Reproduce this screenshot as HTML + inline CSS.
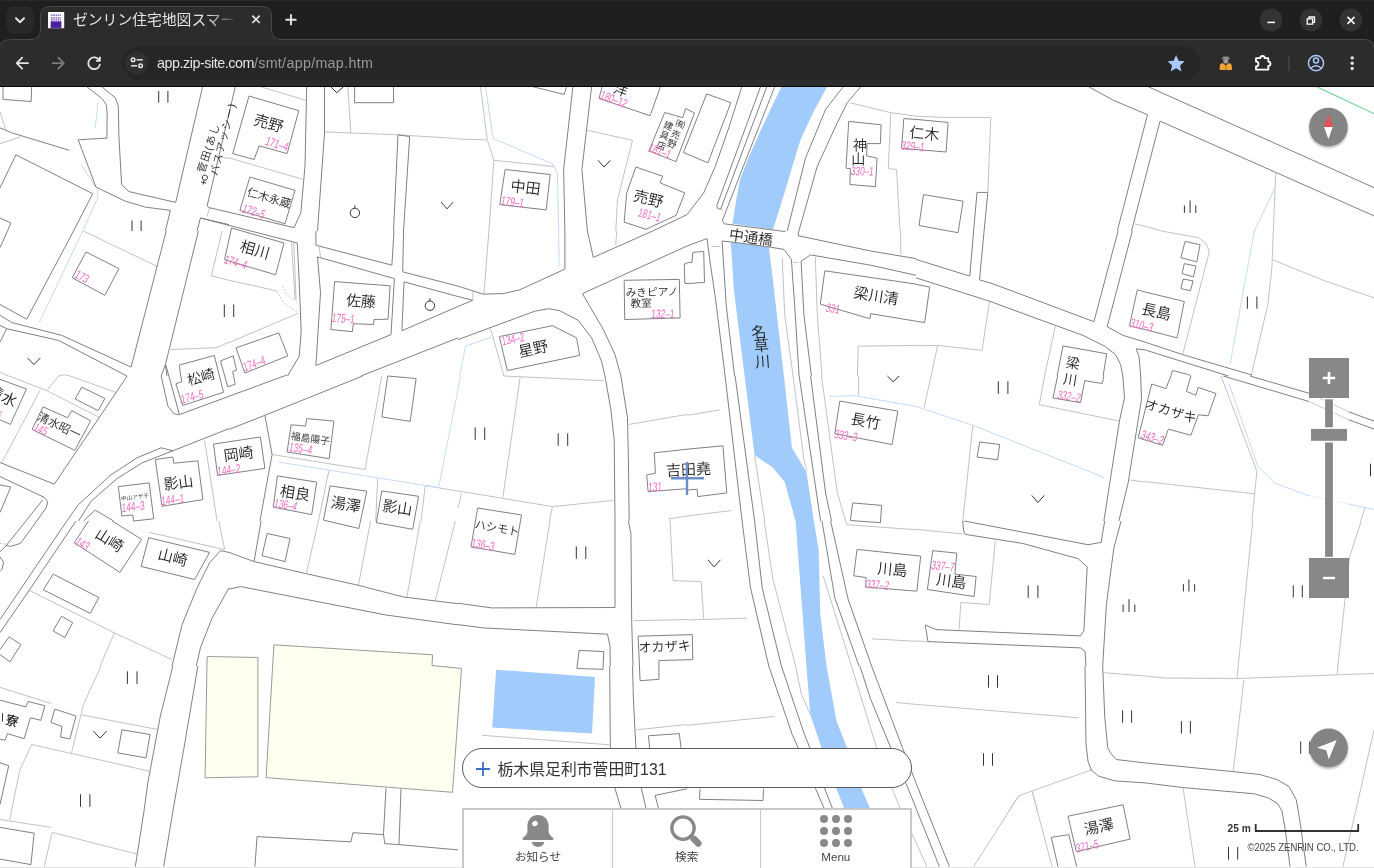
<!DOCTYPE html>
<html lang="ja">
<head>
<meta charset="utf-8">
<title>ゼンリン住宅地図スマートフォン</title>
<style>
*{box-sizing:border-box;margin:0;padding:0}
html,body{width:1374px;height:868px;overflow:hidden;background:#fff;font-family:"Liberation Sans","Noto Sans CJK JP",sans-serif}
#chrome{position:absolute;left:0;top:0;width:1374px;height:87px;background:#1f1f1f;color:#e3e3e3}
#tabtitle{position:absolute;left:73px;top:9px;font-size:14.800px;line-height:22px;white-space:nowrap;width:165px;overflow:hidden;color:#e3e3e3;-webkit-mask-image:linear-gradient(90deg,#000 82%,transparent 99%);mask-image:linear-gradient(90deg,#000 82%,transparent 99%)}
#url{position:absolute;left:157px;top:52px;font-size:14.300px;line-height:22px;color:#e3e3e3;white-space:nowrap;letter-spacing:-0.450px}
#url span{color:#9a9a9a;letter-spacing:0.3px}
#map{position:absolute;left:0;top:87px;width:1374px;height:781px;background:#fff;overflow:hidden}
#mapsvg{position:absolute;left:0;top:-87px;will-change:transform}
.ui{position:absolute}
</style>
</head>
<body>
<div id="map">
<svg id="mapsvg" width="1374" height="868" viewBox="0 0 1374 868">

<circle stroke="#333" stroke-width="1" fill="none" cx="354.9" cy="212.9" r="4.7"/>
<circle stroke="#333" stroke-width="1" fill="none" cx="429.9" cy="305.7" r="4.7"/>
<path stroke="none" fill="#a0cbfb" d="M496.1,669.7 595.0,676.9 592.0,733.6 492.2,727.5Z M783.9,81.0 781.4,86.8 770.5,109.4 758.8,134.4 747.1,161.2 740.1,179.5 736.3,199.6 732.4,223.8 773.0,229.6 785.5,189.6 793.9,161.2 800.6,139.4 813.9,111.1 827.0,86.8 830.3,81.0Z M730.8,241.9 733.8,289.5 744.6,376.0 754.6,455.3 772.2,467.0 784.7,482.0 795.6,521.0 800.6,587.8 806.4,665.9 810.3,714.4 821.5,747.8 836.5,788.7 844.0,807.9 867.4,868.0 895.8,868.0 869.9,807.9 861.5,788.7 847.0,747.8 836.5,721.1 826.5,665.9 820.3,614.5 818.6,549.4 813.9,521.0 806.4,472.0 791.9,447.8 783.9,376.0 773.0,281.1 768.8,246.9Z"/>
<path stroke="#9a9a9a" stroke-width="1" fill="#fffff0" d="M207.1,656.5 257.9,657.5 257.9,776.8 205.1,777.8Z M273.9,644.8 432.6,654.8 432.0,665.5 461.5,668.5 452.5,792.3 266.1,777.6Z"/>
<path stroke="#c2c2c2" stroke-width="1" fill="none" d="M0.0,143.6 20.9,136.9 M0.0,111.9 5.8,129.8 M209.6,207.9 207.1,216.3 M218.8,156.2 229.0,158.7 M260.7,86.8 305.5,100.2 M229.0,157.8 303.3,179.5 M347.9,86.8 350.9,133.6 M324.5,131.9 397.7,134.8 458.0,138.6 M480.5,86.8 487.2,139.4 493.9,160.3 488.9,231.0 M458.0,139.1 486.4,139.8 M493.9,160.3 554.0,166.5 M587.4,130.3 632.5,140.3 617.5,199.6 615.8,231.0 M719.6,207.9 722.9,210.4 M849.9,102.7 890.8,112.7 916.0,116.1 M890.8,112.7 888.3,168.7 896.6,169.5 900.0,231.0 M916.0,116.1 941.1,117.4 990.8,117.4 987.8,192.9 M1134.8,223.8 1145.0,226.3 M1275.8,172.9 1273.3,231.0 M1145.0,226.3 1161.7,231.0 M83.5,231.0 157.0,266.4 M170.4,349.6 217.1,347.6 229.0,342.1 M291.6,242.4 295.0,299.5 M293.8,242.7 296.1,300.3 M222.2,231.0 211.3,275.8 229.0,280.3 276.6,290.8 M229.0,342.6 298.3,313.2 M319.2,246.9 320.5,256.9 M488.9,231.0 483.9,293.6 M472.7,300.3 473.0,291.1 M616.7,231.0 615.8,245.2 M490.6,328.7 503.9,376.0 M711.2,246.5 720.4,246.5 M782.2,257.7 784.7,314.5 793.1,376.0 M793.1,262.4 798.6,262.4 M815.3,256.9 817.3,314.5 822.0,376.0 M900.5,231.0 900.8,254.4 M916.0,345.4 858.2,346.2 857.4,376.0 M989.5,301.2 982.0,350.4 937.7,345.4 916.0,345.7 M937.7,345.4 931.0,376.0 M1055.5,325.4 1044.6,376.0 M1161.7,231.0 1198.4,237.7 1206.0,243.5 1209.3,251.9 1182.6,354.6 M1273.3,231.0 1271.9,267.7 1267.8,304.5 1251.1,376.0 M1272.3,259.7 1325.4,281.1 1374.0,297.8 M58.5,376.0 46.8,390.7 M9.2,376.0 46.8,390.7 100.2,417.8 M40.1,390.2 1.7,462.9 M70.2,376.0 116.9,392.7 M204.6,440.3 217.1,521.0 M272.1,454.5 365.1,469.5 381.8,376.0 M458.0,491.2 425.3,485.4 421.1,521.0 M328.9,470.4 318.4,521.0 M377.7,478.2 375.7,521.0 M503.9,376.0 604.1,380.7 M520.1,377.7 502.8,497.6 M458.0,490.9 552.4,506.6 613.7,500.4 M461.7,492.9 458.0,508.0 M552.4,506.6 549.5,521.0 M629.2,424.4 687.0,414.4 M669.8,521.0 669.3,518.8 687.0,516.0 M754.6,455.3 764.7,521.0 M793.1,376.0 803.9,459.5 806.9,471.2 M821.5,376.0 837.3,492.9 845.7,521.0 846.5,524.7 916.0,529.7 M687.0,415.3 719.6,409.9 M687.0,516.0 731.8,510.5 M858.7,376.0 858.7,395.7 M931.0,376.0 924.0,407.7 M972.8,425.3 962.8,521.0 M1044.6,376.0 1039.3,404.7 1119.4,421.1 M1129.8,479.9 1145.0,482.1 M1221.0,376.0 1256.9,471.2 1251.9,521.0 M1145.0,481.6 1254.4,493.8 M1365.1,508.0 1360.5,521.0 M149.5,532.4 224.7,549.7 M218.8,521.0 224.7,549.7 M29.2,590.3 114.4,632.9 172.0,659.6 M114.4,632.9 100.2,666.0 M318.4,521.0 306.2,573.6 M370.6,521.0 358.4,585.3 M420.2,521.0 406.9,597.0 M455.3,521.0 435.3,600.3 M549.9,521.0 536.2,607.0 M670.1,521.0 673.1,580.6 687.0,581.1 M633.4,620.7 687.0,619.5 M764.2,521.0 773.0,579.5 795.6,666.0 M823.1,575.8 851.5,666.0 M687.0,581.1 701.2,581.5 703.7,618.7 M687.0,619.9 746.8,618.2 M871.6,638.8 916.0,641.3 M916.0,529.4 963.6,534.0 M995.3,540.7 989.2,604.5 960.8,602.5 959.1,629.6 M916.0,640.9 928.0,641.6 M1252.7,521.0 1238.2,666.0 M1361.3,521.0 1349.6,556.9 1337.9,666.0 M101.1,666.0 83.5,704.4 71.5,752.9 M0.0,687.4 51.4,703.6 M81.8,714.9 157.8,729.5 M31.7,744.5 149.5,771.2 M31.7,744.5 20.0,769.6 11.4,811.0 M482.2,735.3 609.2,744.8 M636.4,729.8 687.0,724.5 M795.6,666.0 801.4,694.4 810.3,714.4 M851.5,666.0 876.6,747.8 892.4,788.8 900.0,808.0 M687.0,725.3 774.7,716.4 M896.1,702.4 916.0,704.4 M916.0,704.4 1078.9,717.8 M1104.4,672.7 1145.0,676.0 M1091.4,769.9 1032.1,790.9 1018.7,795.9 1008.7,811.0 M1032.1,790.9 1037.6,811.0 M1145.0,676.0 1165.0,678.0 1236.9,678.5 1374.0,673.5 M1238.2,666.0 1236.9,678.5 M1243.9,679.4 1233.2,771.6 M1337.9,666.0 1337.1,674.4 M1374.0,729.5 1355.8,811.0 M1183.1,787.9 1186.4,811.0 M11.4,811.0 9.7,820.7 M0.0,819.5 50.9,827.4 M137.0,854.1 52.1,832.4 44.3,866.6 M1018.7,796.0 973.6,866.6 M1032.1,791.1 1052.1,866.6 M900.0,807.9 916.0,842.4 926.9,866.6 M1186.4,811.0 1195.1,866.6 M1355.8,811.0 1342.9,866.6 M0.0,372.2 9.2,376.3 M58.5,376.0 64.3,374.7 70.2,376.0"/>
<path stroke="#bbb" stroke-width="0.8" fill="none" stroke-dasharray="2 1.5" d="M282.4,286.1 287.5,295.3 298.3,302.8 M276.6,291.1 284.1,303.7 298.3,312.8 M0.0,543.4 5.5,544.1"/>
<path stroke="#c2dcfb" stroke-width="1" fill="none" d="M98.0,101.9 95.2,128.1 M81.0,164.5 97.7,189.6 97.7,197.9 82.7,231.0 M485.6,86.8 493.1,138.6 552.4,163.7 557.4,172.9 558.7,231.0 M1274.9,187.9 1254.4,231.0 M82.7,231.0 39.3,322.5 M558.7,231.0 559.1,266.4 M491.4,337.1 465.5,346.2 459.7,376.0 M1254.4,231.0 1243.5,289.5 1230.2,363.8 M278.3,462.0 438.6,487.6 458.0,389.4 M458.0,389.4 460.5,376.0 M829.0,396.4 854.0,395.7 916.0,406.4 M916.0,406.4 972.8,425.3 1104.7,477.6 M1229.0,383.5 1257.7,466.2 1274.4,482.9 1306.2,494.9 1374.0,509.6"/>
<path stroke="#7fd9a3" stroke-width="1.3" fill="none" d="M1317.0,86.8 1374.0,113.6"/>
<path stroke="#808080" stroke-width="1" fill="none" d="M3.0,86.0 3.0,99.4 31.2,101.5 31.7,86.0 M0.0,127.8 11.7,132.8 69.3,150.3 M0.0,187.9 15.9,154.8 92.7,193.7 73.5,231.0 M0.0,218.0 10.9,223.0 7.5,231.0 M86.9,86.8 101.9,98.5 106.1,104.4 107.2,112.7 106.9,138.1 78.2,139.8 96.0,187.1 125.3,201.2 145.3,207.1 170.4,210.4 165.4,231.0 M101.9,86.8 115.2,97.7 118.3,106.0 118.9,136.1 121.6,184.5 128.9,191.6 175.7,202.4 202.6,86.8 M229.0,224.6 200.4,218.0 197.1,231.0 M235.3,86.8 207.1,205.9 209.0,207.6 294.1,227.6 300.8,212.9 305.0,166.2 306.7,86.8 M249.0,96.0 298.8,110.7 287.1,153.6 259.1,145.8 254.1,159.5 232.7,153.6Z M249.9,177.0 295.0,190.4 285.0,223.8 239.9,210.4Z M324.5,86.8 324.5,132.8 317.5,231.0 M354.6,86.8 354.6,102.7 393.5,102.7 393.5,86.8 M393.5,231.0 398.0,134.8 409.7,136.6 403.5,231.0 M533.2,86.8 564.1,94.4 566.6,86.8 M572.9,86.8 563.6,169.5 564.9,231.0 M591.6,86.8 581.9,169.5 587.4,231.0 M505.1,169.5 550.2,174.5 546.2,209.9 499.8,204.6Z M602.0,86.8 599.1,98.5 650.1,115.7 660.4,86.8 M635.9,167.0 662.6,176.2 660.1,182.9 684.8,192.9 676.0,215.4 645.9,229.3 624.2,222.1 626.7,192.9Z M664.7,112.5 682.8,117.7 685.6,108.5 694.5,112.9 676.0,161.7 649.0,150.8Z M706.7,93.9 730.9,102.7 707.9,162.8 683.5,152.5Z M741.8,86.8 728.8,127.8 715.4,166.2 703.7,192.9 687.0,214.6 M760.5,86.8 716.7,205.9 717.9,208.8 720.7,209.1 766.8,86.8 M774.7,86.8 742.1,169.5 722.4,220.5 724.1,223.8 773.0,230.0 785.5,231.6 M843.2,86.8 825.6,109.4 805.6,157.8 787.2,231.0 M860.7,86.8 847.3,102.7 837.3,122.7 817.3,166.2 798.9,231.0 M848.7,121.4 881.1,124.8 880.4,143.6 867.1,143.6 866.6,155.8 877.1,158.2 875.4,186.7 849.9,184.5 850.4,168.7 846.0,168.2Z M916.0,119.4 903.8,118.6 901.6,148.1 916.0,149.5 M916.0,119.4 948.1,122.4 946.1,152.0 916.0,149.5 M919.0,225.5 923.5,194.6 963.1,201.2 958.1,232.7Z M973.6,231.0 977.0,192.4 987.8,192.4 984.1,231.0 M1088.9,86.8 1113.1,100.2 1147.5,114.7 1117.3,231.0 M1148.3,86.8 1374.0,187.6 M1131.5,231.0 1160.0,121.1 1374.0,215.9 M73.5,231.0 26.7,319.2 0.0,304.5 M7.5,231.0 0.0,247.7 M166.2,231.0 131.1,367.1 61.8,335.4 11.7,322.5 0.0,315.3 M0.0,325.4 6.7,328.7 0.0,342.1 M6.7,328.7 58.5,340.4 126.9,376.0 M86.0,251.9 118.9,268.6 104.9,295.3 72.2,277.8Z M198.4,231.0 165.4,364.6 161.2,376.0 M165.4,364.6 167.0,376.0 M200.4,218.0 297.3,243.0 299.2,281.1 301.2,331.2 299.2,356.3 287.5,376.0 M231.5,228.0 284.0,243.0 275.6,274.8 224.5,259.7Z M236.0,347.9 278.8,332.9 287.8,355.9 244.9,373.0Z M317.5,256.9 394.4,278.6 391.0,334.6 315.9,365.5 320.5,292.8 317.5,256.9 M334.6,281.6 390.2,285.8 388.0,319.2 374.0,319.5 373.5,324.5 353.4,323.7 352.3,331.7 330.9,329.5Z M315.9,231.0 315.9,245.2 391.9,265.2 394.0,231.0 M403.5,231.0 402.7,271.9 458.0,286.1 M458.0,296.5 404.0,281.9 401.9,330.7 458.0,306.5 M458.0,337.9 361.0,376.0 M564.9,231.0 564.9,269.1 519.8,289.8 503.1,293.6 483.1,294.1 458.0,286.1 M458.0,296.5 472.7,300.3 458.0,306.5 M587.4,231.0 593.3,257.4 652.6,231.0 687.0,214.6 M687.0,246.0 582.4,293.6 603.3,329.5 615.0,354.6 620.9,376.0 M624.2,280.3 679.3,279.4 680.1,317.9 624.7,319.5Z M687.0,263.6 684.3,263.9 684.8,283.1 687.0,283.6 M458.0,339.6 534.8,311.2 549.0,308.7 559.9,310.8 578.3,320.4 591.6,337.9 601.6,361.3 605.0,376.0 M499.4,336.6 552.4,325.7 576.6,337.9 579.6,355.4 507.3,370.5Z M687.0,246.0 707.0,238.5 710.4,264.4 715.4,297.8 725.1,376.0 M687.0,262.7 692.0,262.4 692.8,252.4 703.7,251.4 704.5,282.4 687.0,283.6 M734.6,376.0 726.3,306.2 722.1,241.0 730.8,241.9 768.8,246.9 783.9,249.4 791.4,259.4 794.7,306.2 799.1,376.0 M916.0,275.3 870.7,265.2 810.6,254.9 801.1,261.1 803.9,314.5 811.4,376.0 M798.9,231.0 798.1,235.7 870.7,251.0 916.0,258.6 M916.0,284.1 824.8,270.8 820.3,304.2 869.9,318.7 870.7,313.7 916.0,321.2 M973.6,231.0 969.8,276.1 916.0,259.4 M984.1,231.0 979.5,279.8 993.7,284.1 1093.9,321.7 1118.1,231.0 M916.0,277.8 989.5,301.2 1055.5,325.4 1083.0,335.4 1104.7,346.2 1115.6,354.6 1120.6,364.6 1122.8,376.0 M916.0,284.4 929.7,287.0 924.7,322.5 916.0,321.2 M1132.3,231.0 1107.2,326.7 1123.1,335.4 1145.0,342.1 M1145.0,292.0 1137.3,289.8 1129.5,325.9 1145.0,329.5 M1057.1,376.0 1063.0,345.9 1106.7,353.8 1103.1,376.0 M1145.0,349.9 1136.1,348.8 1139.0,356.3 1140.7,376.0 M1185.1,241.4 1200.1,244.7 1196.8,261.9 1180.9,257.7Z M1184.3,263.6 1195.9,266.1 1193.4,276.9 1182.1,273.6Z M1183.1,279.1 1193.1,280.8 1190.4,290.8 1180.9,288.6Z M1145.0,292.0 1184.3,301.5 1177.1,337.9 1145.0,329.5 M1145.0,342.1 1182.6,354.6 1251.9,375.0 M1145.0,349.9 1228.5,376.0 M126.9,376.0 126.1,377.7 54.3,484.2 0.0,462.5 M0.0,379.3 26.4,389.0 10.4,424.4 0.0,419.8 M43.1,406.9 67.6,417.8 71.8,410.7 90.7,420.8 74.8,450.3 32.1,429.4Z M81.8,387.2 104.9,398.5 98.2,410.7 75.2,399.0Z M66.8,521.0 78.5,504.6 110.2,475.4 137.0,457.8 161.2,447.8 172.9,450.8 229.0,428.6 M78.5,521.0 91.0,501.3 116.9,478.7 142.0,462.9 172.9,450.8 M161.2,376.0 167.9,406.1 173.7,413.6 178.7,414.8 284.1,376.0 286.6,375.2 M155.3,459.5 172.9,457.0 173.7,463.2 197.9,460.9 202.9,499.6 162.0,506.3Z M118.3,486.6 149.2,482.9 153.7,518.8 133.6,521.0 132.8,515.0 121.9,516.0Z M83.5,521.0 95.2,510.0 113.6,521.0 M362.6,376.0 264.9,415.3 229.0,429.4 M264.9,415.3 272.1,454.5 259.9,521.0 M291.1,424.8 305.5,426.1 306.7,418.6 333.9,421.1 329.2,458.7 287.1,452.0Z M387.7,376.0 416.1,378.5 410.2,421.4 381.8,416.9Z M213.5,444.1 260.4,437.0 264.9,468.4 217.6,475.4Z M277.4,475.9 316.7,482.1 311.7,514.6 273.3,507.1Z M330.1,485.9 366.8,491.2 358.9,528.5 323.5,520.1Z M381.8,490.9 418.6,496.3 412.7,529.3 376.3,522.7Z M605.0,376.0 610.8,409.4 614.2,439.5 615.0,521.0 M620.9,376.0 627.5,417.8 628.4,459.5 629.2,521.0 M687.0,449.2 654.3,452.8 655.4,473.2 646.7,474.9 648.1,491.6 687.0,488.7 M477.7,508.0 521.5,515.0 514.8,554.4 471.0,546.9Z M725.1,376.0 742.1,521.0 M735.1,376.0 754.6,521.0 M799.2,376.0 820.6,521.0 M810.6,376.0 825.6,492.9 831.5,521.0 M687.0,449.2 722.9,445.8 726.8,492.9 697.9,496.6 697.0,489.2 687.0,490.1 M839.8,401.1 897.8,411.1 892.1,444.5 834.8,433.6Z M852.7,502.9 881.6,505.4 880.4,522.7 850.4,520.5Z M1057.6,376.0 1053.0,398.0 1080.5,402.7 1084.7,380.7 1102.2,383.5 1103.9,376.0 M1122.8,376.0 1124.5,397.7 1119.4,421.1 1103.9,521.0 M1140.7,376.0 1141.5,399.4 1128.1,482.9 1118.9,521.0 M979.8,442.0 999.8,444.5 997.5,459.8 977.0,457.0Z M1170.9,376.0 1165.9,388.5 1151.7,384.0 1138.2,437.8 1162.5,445.3 1168.4,429.1 1190.9,435.3 1198.4,414.8 1208.1,415.8 1216.0,393.5 1198.1,387.4 1195.9,395.2 1186.4,391.4 1190.9,376.0 1188.8,374.7 1172.6,370.5 1170.9,376.0 M1223.2,376.0 1308.7,401.4 1348.8,419.8 1374.0,429.1 M1250.2,376.0 1310.4,393.7 1348.8,411.9 1374.0,421.1 M0.0,476.6 44.2,497.3 47.7,501.5 46.3,507.7 20.5,543.4 10.4,546.4 6.2,545.4 M42.6,500.1 5.8,546.0 0.0,551.9 M0.0,484.9 10.8,487.0 0.0,512.5 M0.0,556.8 3.5,562.3 2.1,569.2 0.0,571.3 M66.8,521.0 0.0,619.5 M76.0,521.0 29.2,590.3 0.0,632.6 M88.5,521.0 74.3,542.7 119.9,572.4 141.6,539.4 112.2,521.0 M148.7,537.7 209.6,552.4 194.6,579.5 141.1,566.4Z M53.1,574.1 98.9,597.5 90.2,613.4 43.4,589.8Z M61.5,616.2 72.7,622.6 64.8,637.6 53.1,630.9Z M0.0,649.6 9.2,636.8 20.9,644.6 10.0,661.8 0.0,654.6 M220.5,550.7 209.6,562.8 197.1,587.8 182.1,624.6 172.0,666.0 M229.0,587.8 212.1,617.9 200.4,647.9 196.3,666.0 M261.1,521.0 254.1,561.6 M220.5,550.7 229.0,552.4 254.1,561.6 305.8,573.6 358.4,585.3 403.5,597.0 458.0,603.7 M229.0,589.1 240.7,586.6 386.0,615.0 458.0,624.9 M267.1,533.5 290.0,538.5 285.0,561.6 262.1,555.7Z M615.0,521.0 615.0,607.5 491.4,607.9 458.0,603.2 M628.4,521.0 630.9,533.5 631.7,621.2 633.0,666.0 M458.0,624.6 483.1,627.9 607.5,634.2 610.0,646.3 610.3,666.0 M742.1,521.0 750.5,587.8 768.8,666.0 M754.6,521.0 762.2,587.8 781.4,666.0 M822.0,521.0 834.8,597.8 859.0,666.0 M830.6,521.0 848.2,599.5 871.6,666.0 M857.0,549.4 920.7,556.1 916.8,591.2 865.7,587.0 866.1,577.5 853.7,575.8Z M962.8,521.0 963.6,531.0 965.3,534.4 1022.9,543.5 1078.0,558.6 1087.2,566.9 1083.9,630.4 1080.5,635.9 936.0,629.6 925.2,624.9 928.0,641.6 1080.5,647.9 1085.0,651.3 1086.0,666.0 M964.4,521.0 1088.0,544.7 1101.1,542.4 1104.7,521.0 M932.7,550.7 956.9,553.1 954.8,574.1 976.1,576.5 974.1,596.5 927.4,589.5Z M1121.1,521.0 1113.9,547.7 1106.4,604.5 1102.7,666.0 M172.9,666.0 160.3,716.1 147.8,782.9 144.0,811.0 M197.9,666.0 183.7,749.5 172.9,811.0 M0.0,700.2 25.9,706.9 28.1,701.4 44.8,705.8 40.9,720.3 30.4,717.8 24.2,738.7 7.5,733.6 5.0,740.3 0.0,739.2 M54.8,709.1 76.0,716.1 69.8,739.0 60.5,737.0 62.1,726.5 50.9,722.5Z M121.9,729.8 150.0,734.5 146.1,757.9 117.8,752.9Z M0.0,762.9 8.7,765.7 0.0,804.6 M579.1,650.4 603.8,651.6 603.0,669.3 576.9,668.5Z M638.1,636.2 692.3,634.6 692.8,659.6 658.9,660.5 658.9,679.3 640.1,680.7Z M609.7,666.0 610.3,747.8 613.3,782.9 620.9,808.0 M632.5,666.0 633.4,699.4 635.9,747.8 640.1,782.9 645.9,808.0 M649.7,747.8 648.4,735.8 679.3,733.6 681.0,747.8 M687.0,788.8 655.1,795.4 658.4,808.0 M768.8,666.0 792.2,734.5 798.1,747.8 815.6,788.8 824.0,808.0 826.5,814.7 M781.4,666.0 803.9,732.8 809.8,747.8 824.8,788.8 832.3,808.0 834.8,814.7 M859.9,666.0 870.7,699.4 890.8,747.8 905.8,782.9 916.0,808.0 M871.6,666.0 902.5,747.8 916.0,782.9 M700.0,788.8 699.5,799.3 763.0,800.5 763.5,788.8 M1085.0,666.0 1086.0,744.5 1088.0,761.2 1091.4,770.4 1098.9,776.2 1114.8,780.9 1145.0,782.9 M1102.7,666.0 1104.7,716.1 1107.7,747.8 1110.6,752.9 1116.1,759.5 1145.0,762.9 M1145.0,762.9 1233.2,771.6 1260.2,774.6 1277.0,779.6 1289.0,786.6 1296.2,799.6 1298.3,811.0 M1145.0,782.9 1183.4,787.6 1254.4,793.8 1268.6,798.0 1277.8,803.8 1282.0,811.0 M0.0,827.4 34.2,833.2 30.9,864.6 0.0,859.1 M144.0,811.0 135.3,866.6 M172.9,811.0 163.7,866.6 M386.0,788.1 383.5,834.1 384.7,843.6 399.0,844.6 401.0,789.0 M254.9,866.6 257.1,836.6 350.9,841.9 352.9,832.7 383.5,834.6 M399.0,844.6 458.0,849.9 M1068.0,816.2 1123.1,804.8 1130.1,839.1 1076.3,851.6Z M1058.0,866.6 1051.3,837.4 1068.8,834.6 1076.7,866.6 M916.0,783.1 949.4,866.6 M916.0,808.2 939.4,866.6 M1298.3,811.0 1301.2,829.9 1306.2,866.6 M1282.0,811.0 1285.3,829.9 1290.0,866.6 M179.2,365.1 214.3,355.5 223.5,392.3 182.6,405.5 175.9,383.8 181.7,381.8Z M220.5,360.9 233.2,355.9 236.5,370.1 232.7,371.4 235.2,384.3 227.7,386.8Z M165.9,365.1 179.2,413.8"/>
<path stroke="#333" stroke-width="1" fill="none" d="M158.7,91.0 158.7,102.7 M167.9,91.0 167.9,102.7 M132.0,220.5 132.0,231.0 M141.1,220.5 141.1,231.0 M330.9,86.8 336.7,92.7 343.4,86.8 M354.9,205.4 354.9,208.4 M441.1,202.1 447.0,208.8 453.2,202.1 M598.0,160.3 604.1,167.0 610.3,160.3 M1184.4,205.4 1184.4,212.9 M1190.1,200.4 1190.1,212.9 M1195.8,205.4 1195.8,212.9 M27.6,357.9 33.9,364.6 40.4,357.9 M233.7,304.5 233.7,317.0 M224.3,304.5 224.3,317.0 M429.9,298.3 429.9,301.2 M1247.4,296.5 1247.4,308.7 M1256.9,296.5 1256.9,308.7 M475.2,427.4 475.2,439.8 M484.7,427.4 484.7,439.8 M558.2,433.3 558.2,445.8 M567.7,433.3 567.7,445.8 M887.4,376.0 893.3,381.8 899.1,376.0 M998.3,381.3 998.3,393.9 M1007.9,381.3 1007.9,393.9 M1031.8,495.4 1037.9,502.6 1044.3,495.4 M1370.5,463.7 1370.5,476.2 M576.3,546.4 576.3,558.9 M585.8,546.4 585.8,558.9 M707.9,559.8 714.1,566.9 720.4,559.8 M1028.2,585.3 1028.2,597.8 M1037.9,585.3 1037.9,597.8 M1123.1,604.5 1123.1,612.0 M1129.0,599.2 1129.0,612.0 M1134.8,604.5 1134.8,612.0 M1183.4,584.1 1183.4,591.5 M1188.9,579.5 1188.9,591.5 M1194.6,584.1 1194.6,591.5 M1293.3,585.3 1293.3,597.5 M1302.3,585.3 1302.3,597.5 M127.4,671.3 127.4,683.9 M137.0,671.3 137.0,683.9 M80.5,794.3 80.5,806.8 M89.9,794.3 89.9,806.8 M93.5,731.1 99.9,738.2 106.6,731.1 M2.5,713.3 2.5,721.6 M988.5,675.2 988.5,687.7 M997.5,675.2 997.5,687.7 M983.5,753.2 983.5,765.7 M992.5,753.2 992.5,765.7 M1122.6,710.3 1122.6,722.8 M1131.6,710.3 1131.6,722.8 M1181.4,721.1 1181.4,733.6 M1190.4,721.1 1190.4,733.6 M1300.7,741.5 1300.7,753.7 M1309.7,741.5 1309.7,753.7 M1228.5,846.9 1228.5,859.6 M1237.7,846.9 1237.7,859.6"/>
<g font-family="'Liberation Sans','Noto Sans CJK JP',sans-serif" font-weight="350" fill="#1e1e1e" text-anchor="middle">
<text transform="translate(268.6 123.1) rotate(16)" font-size="15" dy="0.36em">売野</text>
<text transform="translate(269.1 197.9) rotate(16)" font-size="11.3" dy="0.36em">仁木永蔵</text>
<text transform="translate(254.9 249.7) rotate(16)" font-size="15" dy="0.36em">相川</text>
<text transform="translate(361.0 301.2) rotate(4)" font-size="15" dy="0.36em">佐藤</text>
<text transform="translate(2.5 396.0) rotate(25)" font-size="15" dy="0.36em">清水</text>
<text transform="translate(59.3 425.6) rotate(25)" font-size="11.7" dy="0.36em">清水昭一</text>
<text transform="translate(201.0 377.0) rotate(-15)" font-size="14" dy="0.36em">松崎</text>
<text transform="translate(178.4 482.6) rotate(-7)" font-size="15" dy="0.36em">影山</text>
<text transform="translate(135.0 497.1) rotate(-7)" font-size="5.6" dy="0.36em">中山アヤ子</text>
<text transform="translate(238.5 453.8) rotate(-8)" font-size="15" dy="0.36em">岡崎</text>
<text transform="translate(310.5 438.6) rotate(8)" font-size="9.8" dy="0.36em">福島陽子</text>
<text transform="translate(295.0 492.9) rotate(9)" font-size="15" dy="0.36em">相良</text>
<text transform="translate(345.9 504.3) rotate(9)" font-size="15" dy="0.36em">湯澤</text>
<text transform="translate(397.4 507.6) rotate(9)" font-size="15" dy="0.36em">影山</text>
<text transform="translate(109.7 540.2) rotate(32)" font-size="15" dy="0.36em">山崎</text>
<text transform="translate(172.9 557.2) rotate(14)" font-size="15" dy="0.36em">山崎</text>
<text transform="translate(525.6 187.4) rotate(7)" font-size="15" dy="0.36em">中田</text>
<text transform="translate(620.8 90.0) rotate(20)" font-size="14" dy="0.36em">洋</text>
<text transform="translate(648.4 198.7) rotate(14)" font-size="15" dy="0.36em">売野</text>
<text transform="translate(859.9 145.3) rotate(0)" font-size="14" dy="0.36em">神</text>
<text transform="translate(858.2 158.7) rotate(0)" font-size="14" dy="0.36em">山</text>
<text transform="translate(924.5 133.5) rotate(5)" font-size="15" dy="0.36em">仁木</text>
<text transform="translate(751.0 237.3) rotate(8)" font-size="14.7" dy="0.36em">中通橋</text>
<text transform="translate(758.8 332.0) rotate(-4)" font-size="15" dy="0.36em">名</text>
<text transform="translate(761.3 345.6) rotate(-4)" font-size="15" dy="0.36em">草</text>
<text transform="translate(762.5 361.5) rotate(-4)" font-size="15" dy="0.36em">川</text>
<text transform="translate(876.1 295.8) rotate(9)" font-size="15" dy="0.36em">梁川清</text>
<text transform="translate(651.8 292.0) rotate(-1)" font-size="10.7" dy="0.36em">みきピアノ</text>
<text transform="translate(641.2 303.2) rotate(-1)" font-size="10.7" dy="0.36em">教室</text>
<text transform="translate(533.2 348.8) rotate(-12)" font-size="15" dy="0.36em">星野</text>
<text transform="translate(1156.5 311.5) rotate(13)" font-size="15" dy="0.36em">長島</text>
<text transform="translate(1073.0 363.0) rotate(9)" font-size="14" dy="0.36em">梁</text>
<text transform="translate(1070.3 379.5) rotate(9)" font-size="14" dy="0.36em">川</text>
<text transform="translate(688.5 469.5) rotate(-3)" font-size="15" dy="0.36em">吉田堯</text>
<text transform="translate(497.1 528.0) rotate(10)" font-size="11.3" dy="0.36em">ハシモト</text>
<text transform="translate(865.7 421.1) rotate(10)" font-size="15" dy="0.36em">長竹</text>
<text transform="translate(1170.9 411.1) rotate(17)" font-size="13.3" dy="0.36em">オカザキ</text>
<text transform="translate(892.4 569.4) rotate(5)" font-size="15" dy="0.36em">川島</text>
<text transform="translate(951.4 581.1) rotate(8)" font-size="15" dy="0.36em">川島</text>
<text transform="translate(664.6 646.5) rotate(-2)" font-size="13.2" dy="0.36em">オカザキ</text>
<text transform="translate(12.0 720.8) rotate(15)" font-size="13" dy="0.36em" font-weight="500">寮</text>
<text transform="translate(1098.9 826.6) rotate(-12)" font-size="15" dy="0.36em">湯澤</text>
<text transform="translate(680.4 124.2) rotate(20)" font-size="9.5" dy="0.36em">㈲</text>
<text transform="translate(675.6 134.7) rotate(20)" font-size="9.5" dy="0.36em">売</text>
<text transform="translate(671.9 144.0) rotate(20)" font-size="9.5" dy="0.36em">野</text>
<text transform="translate(668.3 125.8) rotate(20)" font-size="9.5" dy="0.36em">建</text>
<text transform="translate(664.3 135.5) rotate(20)" font-size="9.5" dy="0.36em">具</text>
<text transform="translate(661.5 145.6) rotate(20)" font-size="9.5" dy="0.36em">店</text>
<text transform="translate(208.5 147.8) rotate(-72)" font-size="10.6" dy="0.36em" letter-spacing="1.1">菅田(あし</text>
<text transform="translate(222.9 139.0) rotate(-75.7)" font-size="10.6" dy="0.36em" letter-spacing="1.1">バスアッシー)</text>
</g>
<g font-family="'Liberation Sans','Noto Sans CJK JP',sans-serif" fill="#f26cc3" text-anchor="middle" font-size="12.4">
<text transform="translate(277.1 143.6) rotate(16) skewX(-5) scale(0.67 1)" dy="0.36em">171–4</text>
<text transform="translate(254.0 211.3) rotate(16) skewX(-5) scale(0.67 1)" dy="0.36em">172–5</text>
<text transform="translate(235.9 262.0) rotate(16) skewX(-5) scale(0.67 1)" dy="0.36em">174–4</text>
<text transform="translate(82.2 276.4) rotate(27) skewX(-5) scale(0.67 1)" dy="0.36em">173</text>
<text transform="translate(343.4 318.2) rotate(4) skewX(-5) scale(0.67 1)" dy="0.36em">175–1</text>
<text transform="translate(254.1 363.3) rotate(-20) skewX(-5) scale(0.67 1)" dy="0.36em">174–4</text>
<text transform="translate(-5.0 413.0) rotate(25) skewX(-5) scale(0.67 1)" dy="0.36em">146</text>
<text transform="translate(40.9 429.1) rotate(25) skewX(-5) scale(0.67 1)" dy="0.36em">145</text>
<text transform="translate(192.1 396.4) rotate(-15) skewX(-5) scale(0.67 1)" dy="0.36em">174–5</text>
<text transform="translate(172.7 499.3) rotate(-7) skewX(-5) scale(0.67 1)" dy="0.36em">144–1</text>
<text transform="translate(133.1 506.3) rotate(-7) skewX(-5) scale(0.67 1)" dy="0.36em">144–3</text>
<text transform="translate(228.8 469.5) rotate(-8) skewX(-5) scale(0.67 1)" dy="0.36em">144–2</text>
<text transform="translate(300.8 448.2) rotate(8) skewX(-5) scale(0.67 1)" dy="0.36em">135–4</text>
<text transform="translate(285.8 504.6) rotate(9) skewX(-5) scale(0.67 1)" dy="0.36em">136–4</text>
<text transform="translate(82.7 543.5) rotate(32) skewX(-5) scale(0.67 1)" dy="0.36em">143</text>
<text transform="translate(512.6 201.6) rotate(7) skewX(-5) scale(0.67 1)" dy="0.36em">179–1</text>
<text transform="translate(614.0 99.0) rotate(20) skewX(-5) scale(0.67 1)" dy="0.36em">180–12</text>
<text transform="translate(660.0 150.8) rotate(20) skewX(-5) scale(0.67 1)" dy="0.36em">181–1</text>
<text transform="translate(649.7 214.6) rotate(14) skewX(-5) scale(0.67 1)" dy="0.36em">181–1</text>
<text transform="translate(862.4 170.8) rotate(1) skewX(-5) scale(0.67 1)" dy="0.36em">330–1</text>
<text transform="translate(913.0 146.0) rotate(5) skewX(-5) scale(0.67 1)" dy="0.36em">329–1</text>
<text transform="translate(833.1 308.3) rotate(9) skewX(-5) scale(0.67 1)" dy="0.36em">331</text>
<text transform="translate(663.0 313.7) rotate(0) skewX(-5) scale(0.67 1)" dy="0.36em">132–1</text>
<text transform="translate(513.0 338.7) rotate(-12) skewX(-5) scale(0.67 1)" dy="0.36em">134–2</text>
<text transform="translate(1141.8 324.9) rotate(13) skewX(-5) scale(0.67 1)" dy="0.36em">310–3</text>
<text transform="translate(1069.2 396.0) rotate(9) skewX(-5) scale(0.67 1)" dy="0.36em">332–2</text>
<text transform="translate(655.1 486.6) rotate(-3) skewX(-5) scale(0.67 1)" dy="0.36em">131</text>
<text transform="translate(483.1 544.4) rotate(10) skewX(-5) scale(0.67 1)" dy="0.36em">136–3</text>
<text transform="translate(846.0 435.3) rotate(10) skewX(-5) scale(0.67 1)" dy="0.36em">333–3</text>
<text transform="translate(1152.5 437.1) rotate(17) skewX(-5) scale(0.67 1)" dy="0.36em">343–2</text>
<text transform="translate(877.7 584.5) rotate(5) skewX(-5) scale(0.67 1)" dy="0.36em">337–2</text>
<text transform="translate(943.1 565.8) rotate(6) skewX(-5) scale(0.67 1)" dy="0.36em">337–7</text>
<text transform="translate(1087.2 845.8) rotate(-12) skewX(-5) scale(0.67 1)" dy="0.36em">371–5</text>
</g>
<g transform="translate(204.3 179.6) rotate(-74)" stroke="#333" fill="none" stroke-width="0.9"><circle cx="2" cy="0" r="2.6"/><path d="M-0.6 0H-5M-3 -2.6V2.6"/></g>
</svg>
</div>
<div class="ui" style="left:0;top:867px;width:1374px;height:1px;background:#e6e6e6"></div>
<svg class="ui" style="left:0;top:0;pointer-events:none" width="1374" height="868" viewBox="0 0 1374 868">
<defs>
<filter id="sh" x="-30%" y="-30%" width="160%" height="170%"><feDropShadow dx="0" dy="1.5" stdDeviation="1.2" flood-color="#000" flood-opacity="0.35"/></filter>
</defs>
<!-- crosshair -->
<path d="M671 478.2H704M687 462V495" stroke="#6b90c9" stroke-width="2.4" fill="none"/>
<!-- compass -->
<circle cx="1328.4" cy="127" r="19.3" fill="#848484" filter="url(#sh)"/>
<path d="M1328.4 114.8L1332.7 127H1324.1Z" fill="#f24b52"/>
<path d="M1328.4 139.3L1332.7 127H1324.1Z" fill="#fff"/>
<!-- zoom slider -->
<rect x="1309" y="398" width="40" height="160" fill="#fff" fill-opacity="0.6"/>
<rect x="1309" y="358" width="40" height="40" fill="#888"/>
<path d="M1322.8 378H1335.2M1329 371.9V384.1" stroke="#fff" stroke-width="2.6" fill="none"/>
<rect x="1324.4" y="398" width="9.2" height="160" fill="#fff"/>
<rect x="1325.1" y="399.3" width="7.8" height="157.5" fill="#888"/>
<rect x="1310.3" y="427.3" width="37.4" height="15.2" fill="#fff"/>
<rect x="1311" y="428.9" width="36" height="11.9" fill="#888"/>
<rect x="1309" y="558" width="40" height="40" fill="#888"/>
<path d="M1322.9 578H1335.1" stroke="#fff" stroke-width="2.4" fill="none"/>
<!-- locate -->
<circle cx="1328.6" cy="747.8" r="19.3" fill="#848484" filter="url(#sh)"/>
<path d="M1336.7 740L1317 747.8L1326.3 750.2L1328.8 759.5Z" fill="#fff"/>
<!-- scale -->
<path d="M1255.7 824V831H1358.2V824" stroke="#333" stroke-width="1.8" fill="none"/>
<text x="1227.5" y="832.3" font-family="'Liberation Sans','Noto Sans CJK JP',sans-serif" font-size="10.2" font-weight="700" fill="#333">25 m</text>
<text transform="translate(1358.6 850.7) scale(0.91 1)" text-anchor="end" font-family="'Liberation Sans','Noto Sans CJK JP',sans-serif" font-size="10.5" fill="#444">©2025 ZENRIN CO., LTD.</text>
</svg>
<div class="ui" id="search" style="left:462px;top:748px;width:450px;height:40px;border:1px solid #5a5a5a;border-radius:20px;background:#fff">
<svg style="position:absolute;left:13px;top:13px" width="14" height="14" viewBox="0 0 14 14"><path d="M0 7H14M7 0V14" stroke="#3b6fc4" stroke-width="1.8" fill="none"/></svg>
<div style="position:absolute;left:34.5px;top:9.5px;font-size:15.85px;color:#333;white-space:nowrap;line-height:22px">栃木県足利市菅田町131</div>
</div>
<div class="ui" id="menu" style="left:462px;top:808px;width:450px;height:62px;border:2px solid #c8c8c8;background:#fff">
<div style="position:absolute;left:148px;top:0;width:1px;height:60px;background:#c8c8c8"></div>
<div style="position:absolute;left:296px;top:0;width:1px;height:60px;background:#c8c8c8"></div>
<svg style="position:absolute;left:-2px;top:-2px" width="450" height="62" viewBox="462 808 450 62">
<!-- bell -->
<path d="M538 815.1c-6 0-10.6 4.6-10.6 11v5.400c0 2.400-1.800 4.300-4.300 6.200-1.200 0.900-0.600 2.200 0.700 2.200h28.400c1.300 0 1.900-1.300 0.700-2.200-2.500-1.900-4.300-3.800-4.300-6.200v-5.400c0-6.400-4.600-11-10.600-11z" fill="#888"/>
<path d="M531.6 842h12.800c-0.600 2.900-3.200 4.900-6.400 4.900s-5.800-2-6.400-4.900z" fill="#888"/>
<ellipse cx="534.9" cy="823.6" rx="2.9" ry="2.500" fill="#fff" transform="rotate(-30 534.9 823.6)"/>
<!-- search -->
<circle cx="683" cy="828.1" r="11.200" fill="none" stroke="#888" stroke-width="3.300"/>
<path d="M693.800 838.900L698.300 843.400" stroke="#888" stroke-width="6.600" stroke-linecap="round"/>
<!-- menu dots -->
<g fill="#888"><circle cx="824" cy="819" r="4"/><circle cx="836" cy="819" r="4"/><circle cx="848" cy="819" r="4"/><circle cx="824" cy="831" r="4"/><circle cx="836" cy="831" r="4"/><circle cx="848" cy="831" r="4"/><circle cx="824" cy="843" r="4"/><circle cx="836" cy="843" r="4"/><circle cx="848" cy="843" r="4"/></g>
<g font-family="'Liberation Sans','Noto Sans CJK JP',sans-serif" font-size="11.6" fill="#444" text-anchor="middle">
<text x="538" y="860.500">お知らせ</text>
<text x="686.700" y="860.500">検索</text>
<text x="835.800" y="860.500">Menu</text>
</g>
</svg>
</div>

<div id="chrome">
<svg style="position:absolute;left:0;top:0" width="1374" height="87" viewBox="0 0 1374 87">
<rect x="0" y="0" width="1374" height="1" fill="#2a2a2a"/>
<rect x="6.300" y="6.300" width="27.500" height="27.500" rx="8" fill="#292929"/>
<path d="M-1 87V50Q-1 40 9.500 39.500H31Q40.500 39.500 40.500 30V16Q40.500 6.500 50.500 6.500H262Q271.500 6.500 271.500 16V30Q271.500 39.500 281.500 39.500H1364Q1374.500 39.500 1374.500 50V87Z" fill="#2c2c2c" stroke="#484848" stroke-width="1"/>
<rect x="122" y="46" width="1078" height="34" rx="17" fill="#262626"/>
<circle cx="136.800" cy="63" r="11.600" fill="#303030"/>
<circle cx="1271" cy="20" r="11.400" fill="#333"/><circle cx="1310.900" cy="20" r="11.400" fill="#333"/><circle cx="1350.800" cy="20" r="11.400" fill="#333"/>
<g fill="none" stroke="#e3e3e3" stroke-width="1.8" stroke-linecap="round" stroke-linejoin="round">
<path d="M16 18.300L20 22.300L24 18.300" stroke-width="2"/>
<path d="M28 63.200H17.200M22.200 57.700L16.700 63.200L22.200 68.700"/>
<path d="M52.500 63.200H63.300M58.300 57.700L63.800 63.200L58.300 68.700" stroke="#7b7b7b"/>
<path d="M99.300 60.300A5.900 5.900 0 1 0 99.900 64.600" />
<path d="M99.900 56.800V60.800H95.900" stroke-linecap="butt"/>
</g>
<g fill="none" stroke="#e3e3e3" stroke-width="1.500">
<circle cx="133.100" cy="59.800" r="1.800"/><path d="M136.600 59.800H142.800"/>
<circle cx="140.600" cy="65.800" r="1.800"/><path d="M131 65.800H137.100"/>
</g>
<!-- favicon -->
<rect x="48" y="12" width="16.200" height="16.200" fill="#fff"/>
<rect x="50.700" y="21.300" width="10.700" height="6.600" fill="#4a1fa0"/>
<path d="M51 15.200H61M51 17.800H61M51 19.800H61" stroke="#6b45b5" stroke-width="1.200" stroke-dasharray="1.600 0.700"/>
<!-- tab close -->
<path d="M252.300 15.600L259.700 23M259.700 15.600L252.300 23" stroke="#e3e3e3" stroke-width="1.700" fill="none"/>
<!-- new tab -->
<path d="M285.500 19.700H296.500M291 14.200V25.200" stroke="#e3e3e3" stroke-width="1.900" fill="none"/>
<!-- window buttons -->
<path d="M1267.400 22.400H1275" stroke="#fff" stroke-width="1.500"/>
<path d="M1307.200 18.900H1312.600V24.200H1307.200Z M1309 18.900V17H1314.500V22.400H1312.600" stroke="#fff" stroke-width="1.300" fill="none"/>
<path d="M1347.500 16.900L1354.500 23.900M1354.500 16.900L1347.500 23.900" stroke="#fff" stroke-width="1.500" fill="none"/>
<!-- star -->
<path d="M1176.100 55.100L1178.600 60.700L1184.700 61.300L1180.100 65.400L1181.400 71.400L1176.100 68.300L1170.800 71.400L1172.100 65.400L1167.500 61.300L1173.600 60.700Z" fill="#a8c7fa"/>
<!-- extension (detective) -->
<path d="M1219.700 70V66.500Q1219.700 63.500 1222.600 63L1225.800 65.500L1229 63Q1231.900 63.500 1231.900 66.500V70Z" fill="#f2a33a"/>
<path d="M1225.800 65.500V70" stroke="#b36b12" stroke-width="1"/>
<circle cx="1225.800" cy="61" r="2.600" fill="#9a9a9a"/>
<path d="M1221.500 59.300H1230.100L1228.300 56.400H1223.300Z" fill="#8a8a8a"/>
<!-- puzzle -->
<path d="M1256 58.200H1260.300A2.200 2.200 0 0 1 1264.700 58.200H1268.300V61.600A2.200 2.200 0 0 1 1268.300 66V69.600H1256V66.400A2.300 2.300 0 0 0 1256 61.500Z" fill="none" stroke="#fff" stroke-width="1.800" stroke-linejoin="round"/>
<path d="M1288.900 55.400V70.900" stroke="#4a4a4a" stroke-width="1.300"/>
<!-- profile -->
<circle cx="1316" cy="63.100" r="7.600" fill="none" stroke="#a8c7fa" stroke-width="1.500"/>
<circle cx="1316" cy="60.500" r="2.500" fill="none" stroke="#a8c7fa" stroke-width="1.500"/>
<path d="M1310.600 68.300Q1316 63.300 1321.400 68.300" fill="none" stroke="#a8c7fa" stroke-width="1.500"/>
<g fill="#e3e3e3"><circle cx="1352.200" cy="57.900" r="1.700"/><circle cx="1352.200" cy="63.200" r="1.700"/><circle cx="1352.200" cy="68.500" r="1.700"/></g>

<rect x="0" y="86" width="1374" height="1" fill="#060606"/>
</svg>
<div id="tabtitle">ゼンリン住宅地図スマートフォン</div>
<div id="url">app.zip-site.com<span>/smt/app/map.htm</span></div>
</div>
</body>
</html>
